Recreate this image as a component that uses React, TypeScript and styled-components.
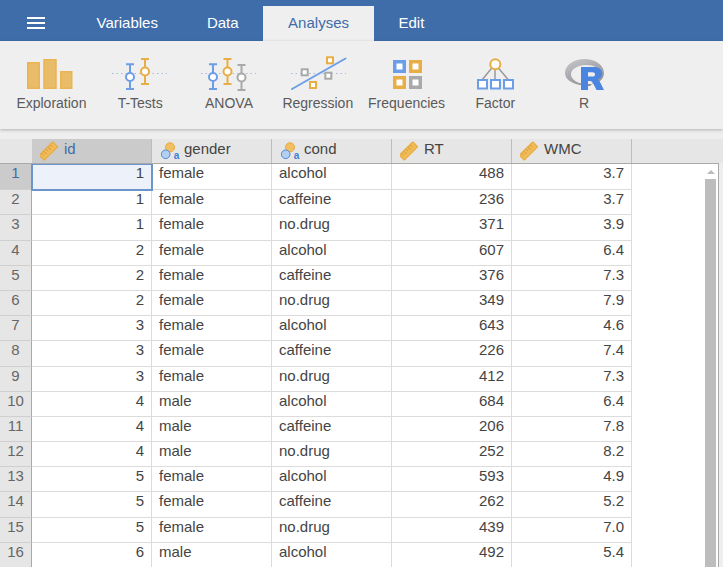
import React from "react"
import styled, { createGlobalStyle } from "styled-components"

const rows: [number, string, string, number, string][] = [
    [1, "female", "alcohol", 488, "3.7"],
    [1, "female", "caffeine", 236, "3.7"],
    [1, "female", "no.drug", 371, "3.9"],
    [2, "female", "alcohol", 607, "6.4"],
    [2, "female", "caffeine", 376, "7.3"],
    [2, "female", "no.drug", 349, "7.9"],
    [3, "female", "alcohol", 643, "4.6"],
    [3, "female", "caffeine", 226, "7.4"],
    [3, "female", "no.drug", 412, "7.3"],
    [4, "male", "alcohol", 684, "6.4"],
    [4, "male", "caffeine", 206, "7.8"],
    [4, "male", "no.drug", 252, "8.2"],
    [5, "female", "alcohol", 593, "4.9"],
    [5, "female", "caffeine", 262, "5.2"],
    [5, "female", "no.drug", 439, "7.0"],
    [6, "male", "alcohol", 492, "5.4"],
]

const BLUE = "#6c9ee8"
const ORANGE = "#e9ad45"
const GRAY = "#a9a9a9"

const ErrorBar: React.FC<{ x: number; top: number; bottom: number; cy: number; color: string }> = ({ x, top, bottom, cy, color }) => (
    <g stroke={color} strokeWidth="2" fill="none">
        <path d={`M${x - 4} ${top}H${x + 4}M${x} ${top}V${bottom}M${x - 4} ${bottom}H${x + 4}`} />
        <circle cx={x} cy={cy} r="4" fill="#fff" />
    </g>
)

const Dots: React.FC<{ from: number; to: number }> = ({ from, to }) => (
    <path d={`M${from} 73.5H${to}`} stroke="#a9bdd6" strokeWidth="1" strokeDasharray="1.5 3" />
)

const Square: React.FC<{ x: number; y: number; color: string }> = ({ x, y, color }) => (
    <rect x={x - 3} y={y - 3} width="6" height="6" fill="#fff" stroke={color} strokeWidth="2" />
)

const BigSquare: React.FC<{ x: number; y: number; color: string }> = ({ x, y, color }) => (
    <rect x={x + 1.75} y={y + 1.75} width="9.5" height="9.5" fill="#fff" stroke={color} strokeWidth="3.5" />
)

const SmallBox: React.FC<{ x: number }> = ({ x }) => (
    <rect x={x} y="80" width="9" height="8.5" fill="#fff" stroke={BLUE} strokeWidth="2" />
)

const ExplorationIcon = () => (
    <IconSvg viewBox="7 55 88 36">
        <g fill="#e9bc69" stroke="#ebb352" strokeWidth="1.5">
            <rect x="27.75" y="62.75" width="11.5" height="25.5" />
            <rect x="44" y="59.75" width="12" height="28.5" />
            <rect x="60.75" y="71.75" width="11" height="16.5" />
        </g>
    </IconSvg>
)

const TTestsIcon = () => (
    <IconSvg viewBox="96 55 88 36">
        <Dots from={112} to={167} />
        <ErrorBar x={130} top={64.3} bottom={89} cy={77} color={BLUE} />
        <ErrorBar x={145} top={59} bottom={84} cy={71.5} color={ORANGE} />
    </IconSvg>
)

const AnovaIcon = () => (
    <IconSvg viewBox="185 55 88 36">
        <Dots from={201} to={256} />
        <ErrorBar x={213} top={64.3} bottom={89} cy={77} color={BLUE} />
        <ErrorBar x={227.5} top={59} bottom={84} cy={71.5} color={ORANGE} />
        <ErrorBar x={241.5} top={65} bottom={90} cy={77.5} color={GRAY} />
    </IconSvg>
)

const RegressionIcon = () => (
    <IconSvg viewBox="274 55 88 36">
        <Dots from={291} to={346} />
        <path d="M292 89L345.5 58.5" stroke={BLUE} strokeWidth="2" strokeLinecap="round" />
        <Square x={304.7} y={72.3} color={GRAY} />
        <Square x={330} y={60.3} color={ORANGE} />
        <Square x={328.3} y={75.7} color={GRAY} />
        <Square x={313} y={85} color={ORANGE} />
    </IconSvg>
)

const FrequenciesIcon = () => (
    <IconSvg viewBox="362 55 88 36">
        <BigSquare x={392} y={60} color={BLUE} />
        <BigSquare x={408} y={60} color={ORANGE} />
        <BigSquare x={392} y={76} color={ORANGE} />
        <BigSquare x={408} y={76} color={GRAY} />
    </IconSvg>
)

const FactorIcon = () => (
    <IconSvg viewBox="451 55 88 36">
        <path d="M495 64L482 80M495 64V80M495 64L508.5 80" stroke="#9a9a9a" strokeWidth="1.5" fill="none" />
        <circle cx="495.3" cy="64.3" r="5" fill="#fff" stroke={ORANGE} strokeWidth="2" />
        <SmallBox x={478} />
        <SmallBox x={491} />
        <SmallBox x={504} />
    </IconSvg>
)

const RLogoIcon = () => (
    <IconSvg viewBox="540 55 88 36">
        <defs>
            <linearGradient id="rRing" x1="0" y1="0" x2="0.6" y2="1">
                <stop offset="0" stopColor="#c9c9cc" />
                <stop offset="1" stopColor="#8f9094" />
            </linearGradient>
        </defs>
        <path
            fillRule="evenodd"
            fill="url(#rRing)"
            d="M565 73C565 65 574 59 584.5 59C595 59 604 65 604 73C604 78 600 82 595 84L587 84C578 84 571 80 571 74C571 69 578 65 586 65C594 65 600 68 600 73C600 75 599 78 596 80L590 86C576 86 565 81 565 73Z"
        />
        <path
            fill="#4a86e0"
            fillRule="evenodd"
            d="M581 67H594C599 67 602 69.500 602 73.500C602 76.500 600.500 78.500 597.500 79.500C599 80.300 599.800 81.500 600.500 83L604 90H596.500L593.500 84C592.500 82 591.500 81 590 81H588V90H581ZM588 72.300V76.500H592.500C594.200 76.500 595 75.700 595 74.400C595 73.100 594.200 72.300 592.500 72.300Z"
        />
    </IconSvg>
)

const RulerIcon = () => (
    <HeaderSvg viewBox="0 0 20 20">
        <g transform="translate(-1 -0.5) rotate(-45 9.500 10.500)">
            <rect x="0" y="7" width="19" height="7" rx="0.500" fill="#f0bb57" stroke="#e9a93c" strokeWidth="1" />
            <path d="M3 7.500V10M6 7.500V11M9 7.500V10M12 7.500V11M15 7.500V10" stroke="#c98f2c" strokeWidth="0.800" />
        </g>
    </HeaderSvg>
)

const NominalIcon = () => (
    <HeaderSvg viewBox="0 0 20 20">
        <circle cx="10" cy="6.300" r="4.500" fill="#f2bf62" stroke="#e9a93c" strokeWidth="1" />
        <circle cx="5.700" cy="13.300" r="4.300" fill="#b4cff0" stroke="#4f8ad8" strokeWidth="1" />
        <IconLetter x="13.800" y="18">a</IconLetter>
    </HeaderSvg>
)

const tabs = ["Variables", "Data", "Analyses", "Edit"]

const tools: [string, React.FC][] = [
    ["Exploration", ExplorationIcon],
    ["T-Tests", TTestsIcon],
    ["ANOVA", AnovaIcon],
    ["Regression", RegressionIcon],
    ["Frequencies", FrequenciesIcon],
    ["Factor", FactorIcon],
    ["R", RLogoIcon],
]

const columns: [string, React.FC][] = [
    ["id", RulerIcon],
    ["gender", NominalIcon],
    ["cond", NominalIcon],
    ["RT", RulerIcon],
    ["WMC", RulerIcon],
]

const App: React.FC = () => {
    return (
        <Page>
            <GlobalStyle />
            <TopBar>
                <Burger>
                    <span />
                    <span />
                    <span />
                </Burger>
                {tabs.map((t) => (
                    <Tab key={t} $active={t === "Analyses"}>{t}</Tab>
                ))}
            </TopBar>
            <Ribbon>
                {tools.map(([label, Icon]) => (
                    <Tool key={label}>
                        <Icon />
                        <ToolLabel>{label}</ToolLabel>
                    </Tool>
                ))}
            </Ribbon>
            <Sheet>
                <HeaderRow>
                    <Corner />
                    {columns.map(([name, Icon], i) => (
                        <HeaderCell key={name} $selected={i === 0}>
                            <Icon />
                            <HeaderLabel>{name}</HeaderLabel>
                        </HeaderCell>
                    ))}
                </HeaderRow>
                <Body>
                    {rows.map((r, i) => (
                        <Row key={i}>
                            <RowNumber $selected={i === 0}>{i + 1}</RowNumber>
                            <Cell $numeric $selected={i === 0}>{r[0]}</Cell>
                            <Cell>{r[1]}</Cell>
                            <Cell>{r[2]}</Cell>
                            <Cell $numeric>{r[3]}</Cell>
                            <Cell $numeric>{r[4]}</Cell>
                        </Row>
                    ))}
                    <Scrollbar>
                        <ArrowUp />
                        <Thumb />
                    </Scrollbar>
                </Body>
            </Sheet>
        </Page>
    )
}
export default App

const GlobalStyle = createGlobalStyle`
    html, body {
        margin: 0;
        padding: 0;
        background: #eeeeee;
    }
    body {
        font-family: "Liberation Sans", Arial, sans-serif;
    }
`
const Page = styled.div`
    width: 723px;
    height: 567px;
    overflow: hidden;
    display: flex;
    flex-direction: column;
    background: #eeeeee;
`
const TopBar = styled.div`
    height: 41px;
    flex-shrink: 0;
    display: flex;
    align-items: flex-end;
    background: #3e6da9;
`
const Burger = styled.div`
    width: 72px;
    height: 41px;
    box-sizing: border-box;
    padding: 17px 0 0 27px;
    display: flex;
    flex-direction: column;
    gap: 3px;

    span {
        display: block;
        width: 18px;
        height: 2px;
        background: #fff;
    }
`
const Tab = styled.div<{ $active?: boolean }>`
    height: 35px;
    box-sizing: border-box;
    padding: 0 ${(p) => (p.$active ? "25px" : "24.5px")};
    font-size: 15px;
    line-height: 34px;
    color: ${(p) => (p.$active ? "#3e6da9" : "#fff")};
    background: ${(p) => (p.$active ? "#efefef" : "transparent")};
`
const Ribbon = styled.div`
    height: 88px;
    flex-shrink: 0;
    box-sizing: border-box;
    padding-left: 7px;
    display: flex;
    background: #efefef;
    box-shadow: 0 1px 3px rgba(0, 0, 0, 0.25);
    position: relative;
    z-index: 1;
`
const Tool = styled.div`
    width: 88.8px;
    padding-top: 14px;
    display: flex;
    flex-direction: column;
    align-items: center;
`
const IconSvg = styled.svg`
    width: 88px;
    height: 36px;
    flex-shrink: 0;
`
const ToolLabel = styled.div`
    margin-top: 3px;
    font-size: 14px;
    line-height: 18px;
    color: #5a5a5a;
    white-space: nowrap;
`
const Sheet = styled.div`
    margin-top: 10px;
    display: flex;
    flex-direction: column;
    flex: 1;
    min-height: 0;
`
const HeaderRow = styled.div`
    height: 24px;
    flex-shrink: 0;
    display: grid;
    grid-template-columns: 32px repeat(5, 120px);
    background: #e6e6e6;
`
const Corner = styled.div`
    background: #e6e6e6;
`
const HeaderCell = styled.div<{ $selected?: boolean }>`
    display: flex;
    align-items: flex-start;
    gap: 4px;
    box-sizing: border-box;
    padding: 2px 0 0 8px;
    font-size: 15px;
    line-height: 18px;
    color: ${(p) => (p.$selected ? "#3e6da9" : "#444")};
    background: ${(p) => (p.$selected ? "#cbcbcb" : "transparent")};
    border-right: 1px solid #bdbdbd;
`
const HeaderLabel = styled.span`
    margin-top: -1px;
`
const HeaderSvg = styled.svg`
    width: 20px;
    height: 20px;
    flex-shrink: 0;
`
const IconLetter = styled.text`
    font-family: "Liberation Sans", Arial, sans-serif;
    font-size: 10px;
    font-weight: 700;
    fill: #3f7fd6;
`
const Body = styled.div`
    position: relative;
    flex: 1;
    min-height: 0;
    width: 719px;
    box-sizing: border-box;
    overflow: hidden;
    background: #fff;
    border-top: 1px solid #a9a9a9;
    border-right: 1px solid #a9a9a9;
`
const Row = styled.div`
    display: grid;
    grid-template-columns: 32px repeat(5, 120px);
    height: 25.2px;
    font-size: 15px;
    line-height: 18px;
    color: #444;

    &:first-child {
        height: 26.2px;
    }
`
const RowNumber = styled.div<{ $selected?: boolean }>`
    box-sizing: border-box;
    text-align: center;
    color: ${(p) => (p.$selected ? "#3e6da9" : "#666")};
    background: ${(p) => (p.$selected ? "#cbcbcb" : "#e6e6e6")};
    border-right: 1px solid #a9a9a9;
    border-bottom: 1px solid #cfcfcf;
`
const Cell = styled.div<{ $numeric?: boolean; $selected?: boolean }>`
    box-sizing: border-box;
    padding-left: 7px;
    padding-right: 7px;
    text-align: ${(p) => (p.$numeric ? "right" : "left")};
    border-right: 1px solid #dcdcdc;
    border-bottom: 1px solid #dcdcdc;
    background: ${(p) => (p.$selected ? "#edf1fa" : "transparent")};
    ${(p) => p.$selected && `
        position: relative;
        outline: 2px solid #6c95cc;
        outline-offset: -1px;
    `}
`
const Scrollbar = styled.div`
    position: absolute;
    top: 0;
    right: 0;
    bottom: 0;
    width: 14px;
    background: #fff;
`
const ArrowUp = styled.div`
    width: 0;
    height: 0;
    margin: 6px 0 0 3px;
    border-left: 4px solid transparent;
    border-right: 4px solid transparent;
    border-bottom: 4px solid #bbb;
`
const Thumb = styled.div`
    margin: 5px 0 0 1px;
    width: 11px;
    height: 500px;
    background: #bdbdbd;
`
